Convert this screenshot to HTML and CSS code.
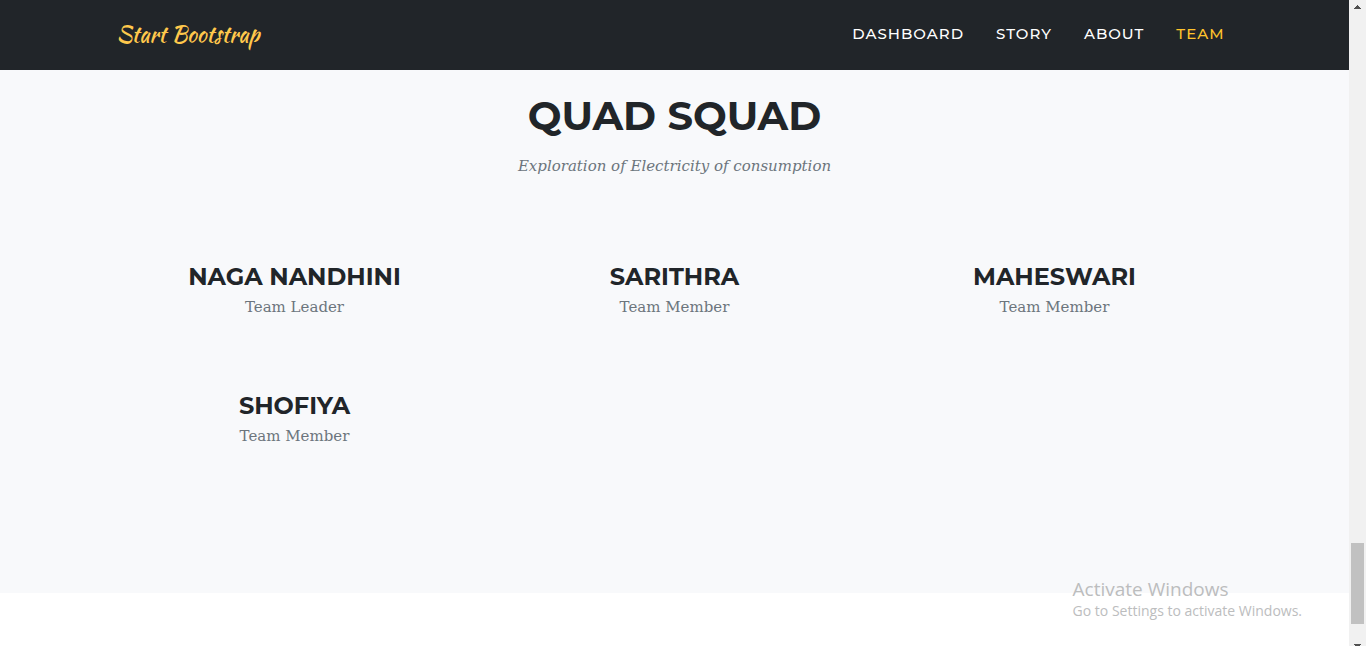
FILE: index.html
```html
<!DOCTYPE html>
<html lang="en">
<head>
<meta charset="utf-8">
<title>Start Bootstrap</title>
<link rel="stylesheet" href="styles.css">
</head>
<body>
<div class="page">
  <header class="navbar">
    <div class="container navbar-inner">
      <a class="brand" href="#top">Start Bootstrap</a>
      <nav class="nav">
        <a href="#dashboard">DASHBOARD</a>
        <a href="#story">STORY</a>
        <a href="#about">ABOUT</a>
        <a class="active" href="#team">TEAM</a>
      </nav>
    </div>
  </header>
  <main class="team" id="team">
    <div class="container">
      <h1 class="heading">QUAD SQUAD</h1>
      <p class="subheading">Exploration of Electricity of consumption</p>
      <div class="members">
        <article class="member"><h2>NAGA NANDHINI</h2><p>Team Leader</p></article>
        <article class="member"><h2>SARITHRA</h2><p>Team Member</p></article>
        <article class="member"><h2>MAHESWARI</h2><p>Team Member</p></article>
        <article class="member"><h2>SHOFIYA</h2><p>Team Member</p></article>
      </div>
    </div>
  </main>
</div>
<div class="scrollbar" aria-hidden="true">
  <svg class="arrow" viewBox="0 0 17 17" shape-rendering="crispEdges"><path d="M5 9V8h1V7h1V6h1V5h1v1h1v1h1v1h1v1z"/></svg>
  <div class="thumb"></div>
  <svg class="arrow" viewBox="0 0 17 17" shape-rendering="crispEdges"><path d="M5 15h7v1h-1v1H6v-1H5z"/></svg>
</div>
<aside class="watermark">
  <p class="watermark-title">Activate Windows</p>
  <p class="watermark-text">Go to Settings to activate Windows.</p>
</aside>
</body>
</html>
```
FILE: styles.css
```css
* { box-sizing: border-box; }
body {
  margin: 0;
  display: flex;
  min-height: 100vh;
  background: #fff;
  color: #212529;
  font-family: "Montserrat", "Inter", sans-serif;
}
h1, h2, p { margin: 0; }
.page { flex: 1; min-width: 0; }
.container { width: 100%; max-width: 1140px; margin: 0 auto; padding: 0 12px; }
.navbar { background: #212529; padding: 16px 0 18px; }
.navbar-inner { display: flex; align-items: center; justify-content: space-between; }
.brand {
  color: #ffc84c;
  font: 400 22px/36px "Kaushan Script", "Lato", cursive;
  text-decoration: none;
}
.nav { display: flex; gap: 32px; padding-right: 8px; }
.nav a {
  color: #fff;
  font: 500 15px/24px "Montserrat", "Inter", sans-serif;
  letter-spacing: 1px;
  text-decoration: none;
}
.nav .active { color: #ffc32c; }
.team { background: #f8f9fb; padding: 22px 0 72px; text-align: center; }
.heading { font-size: 40px; font-weight: 700; line-height: 48px; }
.subheading { margin-top: 14px; color: #6c757d; font: italic 400 15px/24px "Roboto Slab", "DejaVu Serif", serif; }
.members { display: grid; grid-template-columns: repeat(3, 1fr); margin: 85px -12px 0; }
.member { padding-bottom: 73px; }
.member h2 { font-size: 24px; font-weight: 700; line-height: 28px; }
.member p { margin-top: 4px; color: #6c757d; font: 400 15px/24px "Roboto Slab", "DejaVu Serif", serif; }
.scrollbar { width: 17px; display: flex; flex-direction: column; background: #f1f1f1; }
.thumb { height: 81px; margin: auto 2px 5px; background: #c1c1c1; }
.arrow { width: 17px; height: 17px; fill: #505050; }
.watermark { position: absolute; right: 64px; bottom: 25px; color: #bcbdbe; font-family: "Open Sans", sans-serif; }
.watermark-title { font-size: 19px; line-height: 24px; }
.watermark-text { font-size: 14px; line-height: 20px; }
```
